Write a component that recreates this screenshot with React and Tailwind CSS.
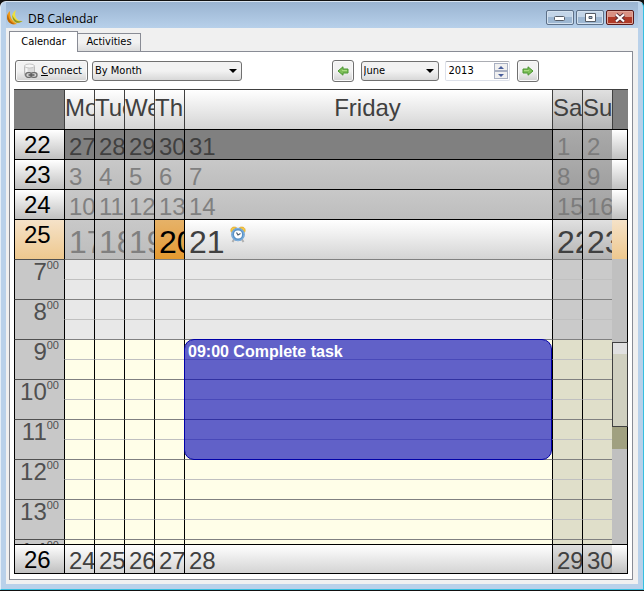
import React from "react";

const WEEKDAYS = ["Monday", "Tuesday", "Wednesday", "Thursday", "Friday", "Saturday", "Sunday"];
const HOURS = [7, 8, 9, 10, 11, 12, 13, 14];

const PANEL = "bg-linear-to-b from-white to-[#d4d4d4]";
const PANEL_WEEKEND = "bg-linear-to-b from-[#e0e0e0] to-[#b4b4b4]";
const WEEK_LABEL = "bg-linear-to-b from-white to-[#c0c0c0]";
const PAST = "bg-linear-to-b from-[#c8c8c8] to-[#bdbdbd]";
const PAST_WEEKEND = "bg-linear-to-b from-[#aaaaaa] to-[#9f9f9f]";
const CURRENT_LABEL = "bg-linear-to-b from-[#f5e2c8] to-[#eec88e]";

const WEEKS = [
  { week: 22, days: [27, 28, 29, 30, 31, 1, 2], day: "bg-[#808080] text-[#404040]" },
  { week: 23, days: [3, 4, 5, 6, 7, 8, 9], day: PAST + " text-[#808080]" },
  { week: 24, days: [10, 11, 12, 13, 14, 15, 16], day: PAST + " text-[#808080]" },
];

const BUTTON =
  "flex h-[22px] items-center justify-center rounded-[3px] border border-[#707070] bg-linear-to-b from-[#f2f2f2] from-50% to-[#d2d2d2] shadow-[inset_0_0_0_1px_#fafafa]";

function Columns() {
  return (
    <colgroup>
      <col className="w-[50px]" />
      <col className="w-[30px]" />
      <col className="w-[30px]" />
      <col className="w-[30px]" />
      <col className="w-[30px]" />
      <col />
      <col className="w-[30px]" />
      <col className="w-[30px]" />
      <col className="w-[16px]" />
    </colgroup>
  );
}

function Grid({ label, children }) {
  return (
    <table aria-label={label} className="w-full shrink-0 table-fixed border-separate border-spacing-0 text-[24px] leading-[24px]">
      <Columns />
      {children}
    </table>
  );
}

function AppIcon() {
  return (
    <svg width="17" height="16" viewBox="0 0 17 16" aria-hidden="true">
      <path d="M4 2C0 5 0 11 4 14C6 15.500 9 15.500 11 15C6 12 3.500 8 4 2Z" fill="#f39a14" />
      <path d="M2 5C0.500 8 1 12 4 14C6 15.500 8 15.300 9 15C4.500 13 2.500 10 2 5Z" fill="#b8660a" />
      <path d="M10 1C4.500 5 5 11 9.500 13.500C12 14.500 15 13.500 16.500 12C10.500 12.500 7.500 7 10 1Z" fill="#efe03a" />
      <path d="M6.500 6C6 9.500 8 13 11 13.800C13 14 15.500 13 16.500 12C12 13.200 8 11 6.500 6Z" fill="#8d9426" />
    </svg>
  );
}

function DatabaseIcon() {
  return (
    <svg width="16" height="16" viewBox="0 0 16 16" aria-hidden="true">
      <path d="M2.500 3V12C2.500 14 12.500 14 12.500 12V3Z" fill="#dadada" stroke="#bcbcbc" />
      <path d="M4.500 5V11" stroke="#f6f6f6" strokeWidth="2" />
      <ellipse cx="7.500" cy="3" rx="5" ry="2" fill="#f6f6f6" stroke="#c4c4c4" />
      <rect x="3.700" y="9.700" width="6" height="4.600" rx="2.200" fill="#d5d5d5" stroke="#6c6c6c" strokeWidth="1.300" />
      <rect x="9" y="9.700" width="6" height="4.600" rx="2.200" fill="#d5d5d5" stroke="#6c6c6c" strokeWidth="1.300" />
      <path d="M6.500 12H12.500" stroke="#555" strokeWidth="1.400" />
    </svg>
  );
}

function Arrow({ left }) {
  return (
    <svg width="12" height="10" viewBox="0 0 12 10" className={left ? "-scale-x-100" : ""} aria-hidden="true">
      <path d="M1 3H6V0.800L11 5L6 9.200V7H1Z" fill="#7fbf5a" stroke="#4a9630" />
      <path d="M2 4.500H7" stroke="#a9dc83" />
    </svg>
  );
}

function AlarmClock() {
  return (
    <svg width="16" height="17" viewBox="0 0 16 17" className="mt-[6px]" role="img" aria-label="Reminder">
      <path d="M1 5.500C0 2 3 0 6.500 1.500L2 6.500Z" fill="#f6c744" stroke="#d9a32a" strokeWidth=".6" />
      <path d="M15 5.500C16 2 13 0 9.500 1.500L14 6.500Z" fill="#f6c744" stroke="#d9a32a" strokeWidth=".6" />
      <path d="M4 13.500L2.500 16M12 13.500L13.500 16" stroke="#b0b0b0" strokeWidth="2" />
      <circle cx="8" cy="8.500" r="5.400" fill="#fff" stroke="#5a93c8" strokeWidth="2.800" />
      <circle cx="8" cy="8.500" r="6" fill="none" stroke="#8fbce6" strokeWidth=".8" />
      <path d="M6.500 6.500L8 9L10.500 7.500" fill="none" stroke="#4a5a6a" strokeWidth="1.200" />
    </svg>
  );
}

function Select({ label, value, options, className }) {
  return (
    <div className={"relative " + className}>
      <select
        aria-label={label}
        defaultValue={value}
        className="block h-[20px] w-full appearance-none rounded-[3px] border border-[#707070] bg-linear-to-b from-[#f2f2f2] from-50% to-[#d8d8d8] pl-[2px] text-[11px] leading-[18px] text-black"
      >
        {options.map((o) => <option key={o}>{o}</option>)}
      </select>
      <svg width="8" height="4" viewBox="0 0 8 4" className="pointer-events-none absolute top-[8px] right-[5px]" aria-hidden="true">
        <path d="M0 0H8L4 4Z" fill="#000" />
      </svg>
    </div>
  );
}

function TitleBar() {
  const button = "flex h-[15px] w-[28px] items-center justify-center rounded-[2px] border";
  const blue = " border-[#5d7088] bg-linear-to-b from-[#c3d5e8] from-45% to-[#9db7d2] to-50% shadow-[inset_0_0_0_1px_#d3e1ef]";
  return (
    <header className="flex h-[26px] shrink-0 items-center bg-linear-to-b from-[#9ab4d1] to-[#b7d0ea] pr-[4px]">
      <div className="pt-[4px]">
        <AppIcon />
      </div>
      <h1 className="ml-[5px] flex-1 pt-[7px] font-['Open_Sans',sans-serif] text-[12px] leading-[16px]">DB Calendar</h1>
      <div className="flex gap-[2px] pt-[5px]">
        <button aria-label="Minimize" className={button + blue}>
          <svg width="12" height="9" viewBox="0 0 12 9" aria-hidden="true"><rect x=".5" y="3.500" width="10" height="4" rx="1" fill="#fff" stroke="#555c66" /></svg>
        </button>
        <button aria-label="Maximize" className={button + blue}>
          <svg width="11" height="9" viewBox="0 0 11 9" aria-hidden="true"><path d="M.5.5H10.500V8.500H.5ZM4 3.500V5.500H7V3.500Z" fill="#fff" stroke="#555c66" fillRule="evenodd" /></svg>
        </button>
        <button aria-label="Close" className={button + " border-[#5a1a1a] bg-linear-to-b from-[#d99183] from-45% to-[#b03a28] to-50% shadow-[inset_0_0_0_1px_#e0a89c]"}>
          <svg width="12" height="10" viewBox="0 0 12 10" aria-hidden="true">
            <path d="M2 1.500L10 8.500M10 1.500L2 8.500" stroke="#5c3038" strokeWidth="4" />
            <path d="M2 1.500L10 8.500M10 1.500L2 8.500" stroke="#fff" strokeWidth="2.200" />
          </svg>
        </button>
      </div>
    </header>
  );
}

function Toolbar() {
  return (
    <div className="mb-[7px] flex items-center pl-[1px]">
      <div className="flex items-center gap-[4px]">
        <button className={BUTTON + " w-[73px] gap-[3px] pl-[1px]"}>
          <DatabaseIcon />
          <span><span className="underline">C</span>onnect</span>
        </button>
        <Select label="View" value="By Month" options={["By Day", "By Week", "By Month"]} className="w-[150px]" />
      </div>
      <div className="flex-1" />
      <div className="flex items-center">
        <button aria-label="Previous month" className={BUTTON + " w-[22px]"}><Arrow left /></button>
        <Select label="Month" value="June" options={["May", "June", "July"]} className="ml-[7px] w-[78px]" />
        <div className="ml-[6px] flex h-[20px] w-[65px] items-center rounded-[2px] border border-[#dde1ea] border-t-[#abadb3] bg-white pr-[1px]">
          <input aria-label="Year" type="text" inputMode="numeric" defaultValue="2013" className="h-[18px] w-0 flex-1 bg-transparent pl-[3px] text-[11px] leading-[18px]" />
          <div className="flex flex-col">
            <button aria-label="Next year" className="flex h-[8px] w-[14px] items-center justify-center border border-[#a9b0c2] bg-[#f0f0f0]">
              <svg width="6" height="3" viewBox="0 0 6 3" aria-hidden="true"><path d="M3 0L6 3H0Z" fill="#4a5f9c" /></svg>
            </button>
            <button aria-label="Previous year" className="flex h-[8px] w-[14px] items-center justify-center border border-[#a9b0c2] bg-[#f0f0f0]">
              <svg width="6" height="3" viewBox="0 0 6 3" aria-hidden="true"><path d="M0 0H6L3 3Z" fill="#4a5f9c" /></svg>
            </button>
          </div>
        </div>
        <button aria-label="Next month" className={BUTTON + " ml-[7px] w-[22px]"}><Arrow /></button>
      </div>
      <div className="flex-1" />
    </div>
  );
}

function MonthHead() {
  return (
    <Grid label="June 2013">
      <thead>
        <tr className="h-[40px]">
          <td className="border-t border-[#404040] bg-[#808080]" />
          {WEEKDAYS.map((name, i) => (
            <th
              key={name}
              scope="col"
              className={
                "overflow-hidden border-t border-l border-[#404040] p-0 pt-[6px] align-top font-normal whitespace-nowrap text-[#404040] " +
                (i === 4 ? "pr-[2px] text-center " : "text-left ") +
                (i > 4 ? PANEL_WEEKEND : PANEL)
              }
            >
              {name}
            </th>
          ))}
          <td className="border-t border-l border-[#404040] bg-[#808080]" />
        </tr>
      </thead>
      <tbody>
        {WEEKS.map((w) => (
          <tr key={w.week} className="h-[30px]">
            <th scope="row" className={"border-t border-l border-black p-0 pt-[3px] pl-[9px] text-left align-top font-normal " + WEEK_LABEL}>{w.week}</th>
            {w.days.map((d, i) => (
              <td
                key={d}
                className={"overflow-hidden border-t border-l border-black p-0 pt-[5px] pl-[4px] align-top whitespace-nowrap " + (i > 4 ? PAST_WEEKEND + " text-[#7c7c7c]" : w.day)}
              >
                {d}
              </td>
            ))}
            <td className={"border-t border-r border-black " + WEEK_LABEL} />
          </tr>
        ))}
        <tr className="h-[40px]">
          <th scope="row" className={"border-t border-l border-black p-0 pt-[3px] pl-[9px] text-left align-top font-normal " + CURRENT_LABEL}>25</th>
          {[17, 18, 19, 20, 21, 22, 23].map((d) => (
            <td
              key={d}
              className={
                "overflow-hidden border-t border-l border-black p-0 pt-[6px] pl-[4px] align-top text-[32px] leading-[32px] whitespace-nowrap " +
                (d < 20
                  ? PAST + " text-[#808080]"
                  : d === 20
                    ? "bg-linear-to-b from-[#e6b268] to-[#e59a2d] text-black"
                    : (d > 21 ? PANEL_WEEKEND : PANEL) + " text-[#404040]")
              }
            >
              {d === 21 ? (
                <div className="-mt-[6px] flex items-start gap-[5px]">
                  <span className="pt-[6px]">21</span>
                  <AlarmClock />
                </div>
              ) : d}
            </td>
          ))}
          <td className={"border-t border-r border-black " + CURRENT_LABEL} />
        </tr>
      </tbody>
    </Grid>
  );
}

function slotColor(hour, column) {
  if (hour < 9) return column > 4 ? "bg-[#cacaca]" : "bg-[#e8e8e8]";
  return column > 4 ? "bg-[#e0dfca]" : "bg-[#fffee8]";
}

function Appointment() {
  return (
    <div className="absolute -top-px -left-px z-10 h-[121px] w-[calc(100%+1px)] rounded-[10px] border border-[#0000a8] bg-[#0000b4]/62 pt-[3px] pl-[3px] text-[16px] leading-[18px] font-bold text-white">
      09:00 Complete task
    </div>
  );
}

function DaySchedule() {
  return (
    <div className="relative min-h-0 flex-1 overflow-hidden">
      <Grid label="Hours of week 25">
        <tbody>
          {HOURS.map((hour) => (
            <React.Fragment key={hour}>
              <tr className="h-[20px]">
                <th scope="row" rowSpan={2} className="border-t border-l border-t-[#505050] border-l-black bg-[#c8c8c8] p-0 pr-[5px] align-top font-normal text-[#505050]">
                  <div className="flex items-start justify-end">
                    <span>{hour}</span>
                    <span className="pt-[1px] text-[11px] leading-[8px]">00</span>
                  </div>
                </th>
                {WEEKDAYS.map((name, i) => (
                  <td key={name} className={"relative border-t border-l border-t-[#808080] border-l-black p-0 " + slotColor(hour, i)}>
                    {hour === 9 && i === 4 && <Appointment />}
                  </td>
                ))}
                <td rowSpan={2} />
              </tr>
              <tr className="h-[20px]">
                {WEEKDAYS.map((name, i) => (
                  <td key={name} className={"border-t border-l border-t-[#c0c0c0] border-l-black p-0 " + slotColor(hour, i)} />
                ))}
              </tr>
            </React.Fragment>
          ))}
        </tbody>
      </Grid>
      <div className="absolute inset-y-0 right-0 w-[16px] border-r border-black bg-[#c0c0c0] pt-[83px]">
        <div className="-mr-px h-[85px] border border-[#404040] bg-[#d0d0c0]">
          <div className="h-[11px] bg-[#e0e0e0]" />
        </div>
        <div className="h-[22px] bg-[#a0a080]" />
      </div>
    </div>
  );
}

function MonthFoot() {
  return (
    <Grid label="Week 26">
      <tbody>
        <tr className="h-[30px]">
          <th scope="row" className={"border-y border-l border-black p-0 pt-[3px] pl-[9px] text-left align-top font-normal " + WEEK_LABEL}>26</th>
          {[24, 25, 26, 27, 28, 29, 30].map((d, i) => (
            <td
              key={d}
              className={"overflow-hidden border-y border-l border-black p-0 pt-[4px] pl-[4px] align-top whitespace-nowrap text-[#404040] " + (i > 4 ? PANEL_WEEKEND : PANEL)}
            >
              {d}
            </td>
          ))}
          <td className={"border-y border-r border-black " + WEEK_LABEL} />
        </tr>
      </tbody>
    </Grid>
  );
}

export default function App() {
  return (
    <div className="h-screen bg-[#111] py-px font-['DejaVu_Sans_Condensed','DejaVu_Sans',sans-serif] text-[11px] text-black">
      <div className="flex h-full flex-col overflow-hidden rounded-t-[6px] border border-t-[#d8e4f0] border-r-[#35bfe0] border-b-[#35bfe0] border-l-[#e4eef8] bg-[#b9d1ea] px-[5px] pb-[5px]">
        <TitleBar />
        <main className="flex min-h-0 flex-1 flex-col bg-[#f0f0f0] px-[3px] pt-[3px] pr-[5px] pb-[4px]">
          <div role="tablist" className="flex items-end">
            <button role="tab" aria-selected="true" className="z-10 -mb-px h-[21px] w-[69px] border border-b-0 border-[#898c95] bg-white">Calendar</button>
            <button role="tab" aria-selected="false" className="h-[18px] w-[63px] border border-b-0 border-l-0 border-[#898c95] bg-linear-to-b from-[#f2f2f2] from-50% to-[#dcdcdc]">Activities</button>
          </div>
          <section className="flex min-h-0 flex-1 flex-col border border-[#898c95] bg-white px-[4px] pt-[8px] pb-[5px]">
            <Toolbar />
            <div className="flex min-h-0 flex-1 flex-col font-['Liberation_Sans',Arial,sans-serif]">
              <MonthHead />
              <DaySchedule />
              <MonthFoot />
            </div>
          </section>
        </main>
      </div>
    </div>
  );
}
